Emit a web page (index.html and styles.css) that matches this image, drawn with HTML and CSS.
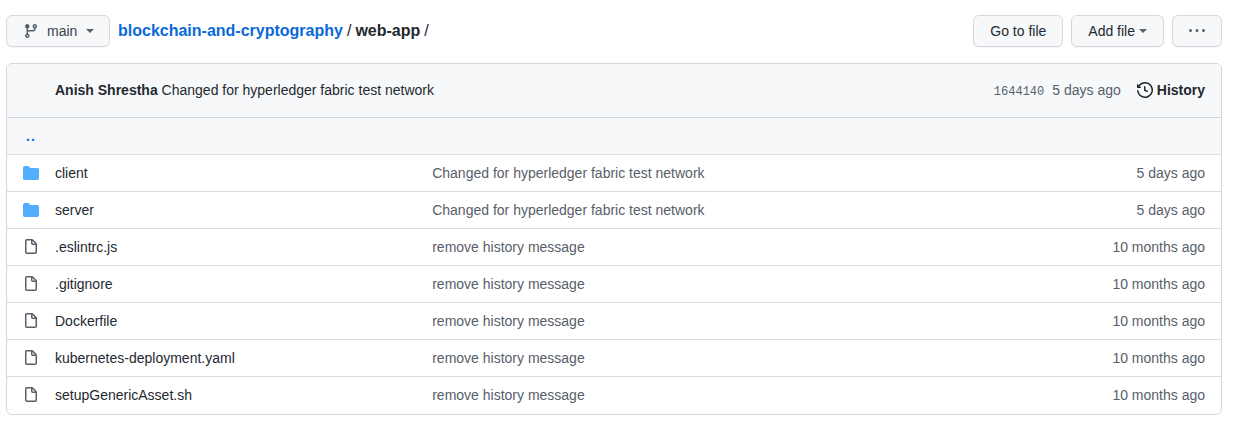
FILE: index.html
```html
<!DOCTYPE html>
<html lang="en">
<head>
<meta charset="utf-8">
<title>web-app</title>
<link rel="stylesheet" href="styles.css">
</head>
<body>
<main class="page">
  <div class="topbar">
    <button class="btn branch">
      <svg class="icon" viewBox="0 0 16 16" width="16" height="16"><path d="M11.75 2.5a.75.75 0 100 1.5.75.75 0 000-1.5zm-2.25.75a2.25 2.25 0 113 2.122V6A2.5 2.5 0 0110 8.5H6a1 1 0 00-1 1v1.128a2.251 2.251 0 11-1.5 0V5.372a2.25 2.25 0 111.5 0v1.836A2.492 2.492 0 016 7h4a1 1 0 001-1v-.628A2.25 2.25 0 019.5 3.25zM4.25 12a.75.75 0 100 1.5.75.75 0 000-1.5zM3.5 3.25a.75.75 0 111.5 0 .75.75 0 01-1.5 0z"/></svg>
      <span class="branch-name">main</span>
      <span class="caret"></span>
    </button>
    <div class="crumbs"><a class="repo" href="#">blockchain-and-cryptography</a><span class="sep">/</span><strong class="current">web-app</strong><span class="sep">/</span></div>
    <div class="actions">
      <button class="btn action">Go to file</button>
      <button class="btn action">Add file<span class="caret dark"></span></button>
      <button class="btn more" aria-label="More">
        <svg viewBox="0 0 16 16" width="16" height="16"><path d="M8 9a1.5 1.5 0 100-3 1.5 1.5 0 000 3zM1.5 9a1.5 1.5 0 100-3 1.5 1.5 0 000 3zm13 0a1.5 1.5 0 100-3 1.5 1.5 0 000 3z"/></svg>
      </button>
    </div>
  </div>
  <section class="box">
    <header class="commit">
      <div class="commit-msg"><strong>Anish Shrestha</strong> Changed for hyperledger fabric test network</div>
      <div class="commit-meta">
        <code class="sha">1644140</code>
        <span class="when">5 days ago</span>
        <a class="history" href="#">
          <svg viewBox="0 0 16 16" width="16" height="16"><path d="M1.643 3.143L.427 1.927A.25.25 0 000 2.104V5.75c0 .138.112.25.25.25h3.646a.25.25 0 00.177-.427L2.715 4.215a6.5 6.5 0 11-1.18 4.458.75.75 0 10-1.493.154 8.001 8.001 0 101.6-5.684zM7.75 4a.75.75 0 01.75.75v2.992l2.028.812a.75.75 0 01-.557 1.392l-2.5-1A.75.75 0 017 8.25v-3.5A.75.75 0 017.75 4z"/></svg>
          History
        </a>
      </div>
    </header>
    <div class="row up"><a href="#">..</a></div>
    <div class="row">
      <svg class="ficon folder" viewBox="0 0 16 16" width="16" height="16"><path d="M1.75 1A1.75 1.75 0 000 2.75v10.5C0 14.216.784 15 1.75 15h12.5A1.75 1.75 0 0016 13.25v-8.5A1.75 1.75 0 0014.25 3H7.5a.25.25 0 01-.2-.1l-.9-1.2C6.07 1.26 5.55 1 5 1H1.75z"/></svg>
      <span class="name">client</span><span class="msg">Changed for hyperledger fabric test network</span><span class="age">5 days ago</span>
    </div>
    <div class="row">
      <svg class="ficon folder" viewBox="0 0 16 16" width="16" height="16"><path d="M1.75 1A1.75 1.75 0 000 2.75v10.5C0 14.216.784 15 1.75 15h12.5A1.75 1.75 0 0016 13.25v-8.5A1.75 1.75 0 0014.25 3H7.5a.25.25 0 01-.2-.1l-.9-1.2C6.07 1.26 5.55 1 5 1H1.75z"/></svg>
      <span class="name">server</span><span class="msg">Changed for hyperledger fabric test network</span><span class="age">5 days ago</span>
    </div>
    <div class="row">
      <svg class="ficon file" viewBox="0 0 16 16" width="16" height="16"><path fill-rule="evenodd" d="M3.75 1.5a.25.25 0 00-.25.25v11.5c0 .138.112.25.25.25h8.5a.25.25 0 00.25-.25V6H9.75A1.75 1.75 0 018 4.25V1.5H3.75zm5.75.56v2.19c0 .138.112.25.25.25h2.19L9.5 2.06zM2 1.75C2 .784 2.784 0 3.75 0h5.086c.464 0 .909.184 1.237.513l3.414 3.414c.329.328.513.773.513 1.237v8.086A1.75 1.75 0 0112.25 15h-8.5A1.75 1.75 0 012 13.25V1.75z"/></svg>
      <span class="name">.eslintrc.js</span><span class="msg">remove history message</span><span class="age">10 months ago</span>
    </div>
    <div class="row">
      <svg class="ficon file" viewBox="0 0 16 16" width="16" height="16"><path fill-rule="evenodd" d="M3.75 1.5a.25.25 0 00-.25.25v11.5c0 .138.112.25.25.25h8.5a.25.25 0 00.25-.25V6H9.75A1.75 1.75 0 018 4.25V1.5H3.75zm5.75.56v2.19c0 .138.112.25.25.25h2.19L9.5 2.06zM2 1.75C2 .784 2.784 0 3.75 0h5.086c.464 0 .909.184 1.237.513l3.414 3.414c.329.328.513.773.513 1.237v8.086A1.75 1.75 0 0112.25 15h-8.5A1.75 1.75 0 012 13.25V1.75z"/></svg>
      <span class="name">.gitignore</span><span class="msg">remove history message</span><span class="age">10 months ago</span>
    </div>
    <div class="row">
      <svg class="ficon file" viewBox="0 0 16 16" width="16" height="16"><path fill-rule="evenodd" d="M3.75 1.5a.25.25 0 00-.25.25v11.5c0 .138.112.25.25.25h8.5a.25.25 0 00.25-.25V6H9.75A1.75 1.75 0 018 4.25V1.5H3.75zm5.75.56v2.19c0 .138.112.25.25.25h2.19L9.5 2.06zM2 1.75C2 .784 2.784 0 3.75 0h5.086c.464 0 .909.184 1.237.513l3.414 3.414c.329.328.513.773.513 1.237v8.086A1.75 1.75 0 0112.25 15h-8.5A1.75 1.75 0 012 13.25V1.75z"/></svg>
      <span class="name">Dockerfile</span><span class="msg">remove history message</span><span class="age">10 months ago</span>
    </div>
    <div class="row">
      <svg class="ficon file" viewBox="0 0 16 16" width="16" height="16"><path fill-rule="evenodd" d="M3.75 1.5a.25.25 0 00-.25.25v11.5c0 .138.112.25.25.25h8.5a.25.25 0 00.25-.25V6H9.75A1.75 1.75 0 018 4.25V1.5H3.75zm5.75.56v2.19c0 .138.112.25.25.25h2.19L9.5 2.06zM2 1.75C2 .784 2.784 0 3.75 0h5.086c.464 0 .909.184 1.237.513l3.414 3.414c.329.328.513.773.513 1.237v8.086A1.75 1.75 0 0112.25 15h-8.5A1.75 1.75 0 012 13.25V1.75z"/></svg>
      <span class="name">kubernetes-deployment.yaml</span><span class="msg">remove history message</span><span class="age">10 months ago</span>
    </div>
    <div class="row">
      <svg class="ficon file" viewBox="0 0 16 16" width="16" height="16"><path fill-rule="evenodd" d="M3.75 1.5a.25.25 0 00-.25.25v11.5c0 .138.112.25.25.25h8.5a.25.25 0 00.25-.25V6H9.75A1.75 1.75 0 018 4.25V1.5H3.75zm5.75.56v2.19c0 .138.112.25.25.25h2.19L9.5 2.06zM2 1.75C2 .784 2.784 0 3.75 0h5.086c.464 0 .909.184 1.237.513l3.414 3.414c.329.328.513.773.513 1.237v8.086A1.75 1.75 0 0112.25 15h-8.5A1.75 1.75 0 012 13.25V1.75z"/></svg>
      <span class="name">setupGenericAsset.sh</span><span class="msg">remove history message</span><span class="age">10 months ago</span>
    </div>
  </section>
</main>
</body>
</html>
```
FILE: styles.css
```css
* { box-sizing: border-box; }
html, body { margin: 0; background: #fff; }
body {
  font-family: "Liberation Sans", Arial, sans-serif;
  font-size: 14px;
  color: #24292f;
  overflow: hidden;
}
a { text-decoration: none; color: inherit; }
.page { padding: 15px 14px 0 6px; }
.topbar { display: flex; align-items: center; height: 32px; margin-bottom: 16px; }
.btn {
  display: inline-flex;
  align-items: center;
  height: 32px;
  padding: 0 16px;
  font: 14px "Liberation Sans", Arial, sans-serif;
  color: #24292f;
  background: #f6f8fa;
  border: 1px solid #d5d8dc;
  border-radius: 6px;
  box-shadow: 0 1px 0 rgba(27,31,36,.04);
}
.branch { width: 104px; color: #24292f; }
.icon { fill: #57606a; flex: none; }
.branch-name { margin-left: 8px; color: #3b4249; }
.caret {
  width: 0; height: 0;
  margin-left: 9px;
  border: 4px solid transparent;
  border-top-color: #57606a;
  border-bottom: 0;
}
.caret.dark { margin-left: 4px; border-top-color: #57606a; }
.crumbs { margin-left: 8px; font-size: 16px; line-height: 24px; }
.repo { color: #0969da; font-weight: 700; }
.sep { margin: 0 4px; }
.current { font-weight: 700; }
.actions { margin-left: auto; display: flex; gap: 8px; }
.more { width: 50px; padding: 0; justify-content: center; }
.more svg { fill: #57606a; }
.box { border: 1px solid #d0d7de; border-radius: 6px; overflow: hidden; }
.commit {
  display: flex;
  align-items: center;
  justify-content: space-between;
  height: 54px;
  padding: 0 16px 2px 48px;
  background: #f6f8fa;
  border-bottom: 1px solid #d0d7de;
}
.commit-meta { display: flex; align-items: center; color: #57606a; }
.sha { font: 12px "Liberation Mono", monospace; color: #57606a; position: relative; top: 2px; }
.when { margin-left: 8px; }
.history { display: flex; align-items: center; margin-left: 16px; font-weight: 700; color: #24292f; }
.history svg { fill: #24292f; margin-right: 4px; }
.row {
  display: flex;
  align-items: center;
  height: 37px;
  padding: 0 16px;
  border-top: 1px solid #d8dee4;
}
.commit + .row { border-top: 0; height: 36px; }
.up { background: #f6f8fa; padding-left: 19px; }
.up a { color: #0969da; font-weight: 700; letter-spacing: 1px; }
.row:last-child { height: 38px; padding-bottom: 1px; }
.ficon { flex: none; }
.folder { fill: #54aeff; }
.file { fill: #57606a; }
.name { width: 377.2px; margin-left: 16px; flex: none; color: #24292f; }
.msg { color: #57606a; flex: 1; }
.age { color: #57606a; }
```
